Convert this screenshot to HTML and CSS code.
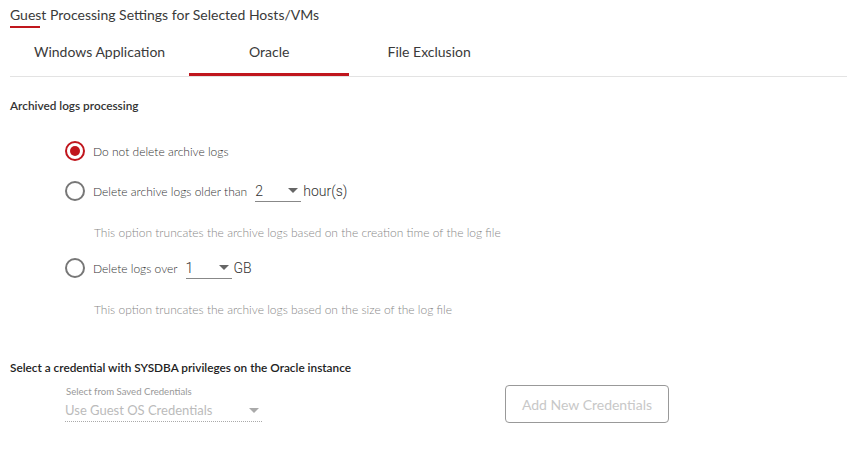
FILE: index.html
```html
<!DOCTYPE html>
<html lang="en">
<head>
    <meta charset="UTF-8">
    <title>Guest Processing Settings</title>
    <link rel="stylesheet" href="styles.css">
</head>
<body>
    <div class="page">
        <h1 class="page-title">Guest Processing Settings for Selected Hosts/VMs</h1>

        <div class="tabs">
            <div class="tab">Windows Application</div>
            <div class="tab active">Oracle</div>
            <div class="tab">File Exclusion</div>
        </div>

        <div class="section">
            <h2 class="section-title">Archived logs processing</h2>

            <div class="options">
                <label class="option">
                    <span class="radio checked"></span>
                    <span>Do not delete archive logs</span>
                </label>

                <label class="option">
                    <span class="radio"></span>
                    <span>Delete archive logs older than</span>
                    <span class="mini-select"><span>2</span><span class="caret"></span></span>
                    <span class="unit">hour(s)</span>
                </label>
                <p class="hint">This option truncates the archive logs based on the creation time of the log file</p>

                <label class="option">
                    <span class="radio"></span>
                    <span>Delete logs over</span>
                    <span class="mini-select"><span>1</span><span class="caret"></span></span>
                    <span class="unit">GB</span>
                </label>
                <p class="hint">This option truncates the archive logs based on the size of the log file</p>
            </div>
        </div>

        <div class="section credentials">
            <h2 class="section-title dark">Select a credential with SYSDBA privileges on the Oracle instance</h2>

            <div class="cred-row">
                <div class="cred-select">
                    <div class="cred-label">Select from Saved Credentials</div>
                    <div class="cred-value">
                        <span>Use Guest OS Credentials</span>
                        <span class="caret light"></span>
                    </div>
                </div>
                <button class="btn-outline" disabled>Add New Credentials</button>
            </div>
        </div>
    </div>
</body>
</html>
```

FILE: styles.css
```css
* {
    margin: 0;
    padding: 0;
    box-sizing: border-box;
}

body {
    background-color: #fff;
    font-family: Lato, "Open Sans", sans-serif;
    color: #333;
}

.page {
    padding: 0 0 0 10px;
}

.page-title {
    font-size: 14px;
    font-weight: normal;
    line-height: 20px;
    padding-top: 5px;
    height: 30px;
    color: #3a3a3a;
    position: relative;
}

.page-title::after {
    content: "";
    position: absolute;
    left: 0;
    top: 26px;
    width: 30px;
    height: 2px;
    background-color: #c0161d;
}

/* Tabs */
.tabs {
    display: flex;
    border-bottom: 1px solid #e3e3e3;
}

.tab {
    min-width: 160px;
    padding: 12px 24px 11px;
    font-size: 14px;
    line-height: 20px;
    text-align: center;
    color: #3a3a3a;
    border-bottom: 3px solid transparent;
}

.tab.active {
    border-bottom-color: #c0161d;
}

/* Sections */
.section-title {
    font-size: 11.8px;
    font-weight: 600;
    color: #333;
    line-height: 16px;
    margin-top: 21px;
}

.section-title.dark {
    color: #222;
}

.options {
    padding-left: 55px;
    padding-top: 25px;
}

.option {
    display: flex;
    align-items: center;
    gap: 8px;
    height: 24px;
    font-size: 12px;
    font-weight: 300;
    color: #333;
    margin-bottom: 16px;
}

.radio {
    width: 20px;
    height: 20px;
    border: 2px solid #777;
    border-radius: 50%;
    display: flex;
    align-items: center;
    justify-content: center;
    flex-shrink: 0;
}

.radio.checked {
    border-color: #c0161d;
}

.radio.checked::after {
    content: "";
    width: 10px;
    height: 10px;
    border-radius: 50%;
    background-color: #c0161d;
}

.mini-select {
    display: flex;
    justify-content: space-between;
    align-items: center;
    width: 46px;
    height: 22px;
    border-bottom: 1px solid #888;
    font-family: Roboto, sans-serif;
    font-size: 14px;
    color: #333;
}

.caret {
    width: 0;
    height: 0;
    border-left: 5px solid transparent;
    border-right: 5px solid transparent;
    border-top: 5px solid #666;
    margin-right: 3px;
}

.caret.light {
    border-top-color: #aaa;
}

.unit {
    font-family: Roboto, sans-serif;
    font-size: 14px;
    margin-left: -6px;
}

.hint {
    font-size: 12px;
    font-weight: 300;
    color: #888;
    padding-left: 29px;
    line-height: 14px;
    margin: 23px 0 16px;
}

/* Credentials */
.credentials .section-title {
    margin-top: 43px;
}

.cred-row {
    display: flex;
    align-items: flex-start;
    padding-top: 10px;
}

.cred-select {
    width: 197px;
    margin-left: 55px;
    border-bottom: 1px dotted #aaa;
    padding-bottom: 1px;
}

.cred-label {
    font-size: 9.6px;
    color: #999;
    line-height: 12px;
    padding-left: 1px;
}

.cred-value {
    display: flex;
    justify-content: space-between;
    align-items: center;
    font-size: 13px;
    color: #bbb;
    line-height: 20px;
    margin-top: 2px;
}

.btn-outline {
    margin: -1px 0 0 243px;
    width: 164px;
    height: 38px;
    border: 1px solid #999;
    border-radius: 4px;
    background: #fff;
    font-family: Lato, sans-serif;
    font-size: 14px;
    color: #c8c8c8;
}
```
